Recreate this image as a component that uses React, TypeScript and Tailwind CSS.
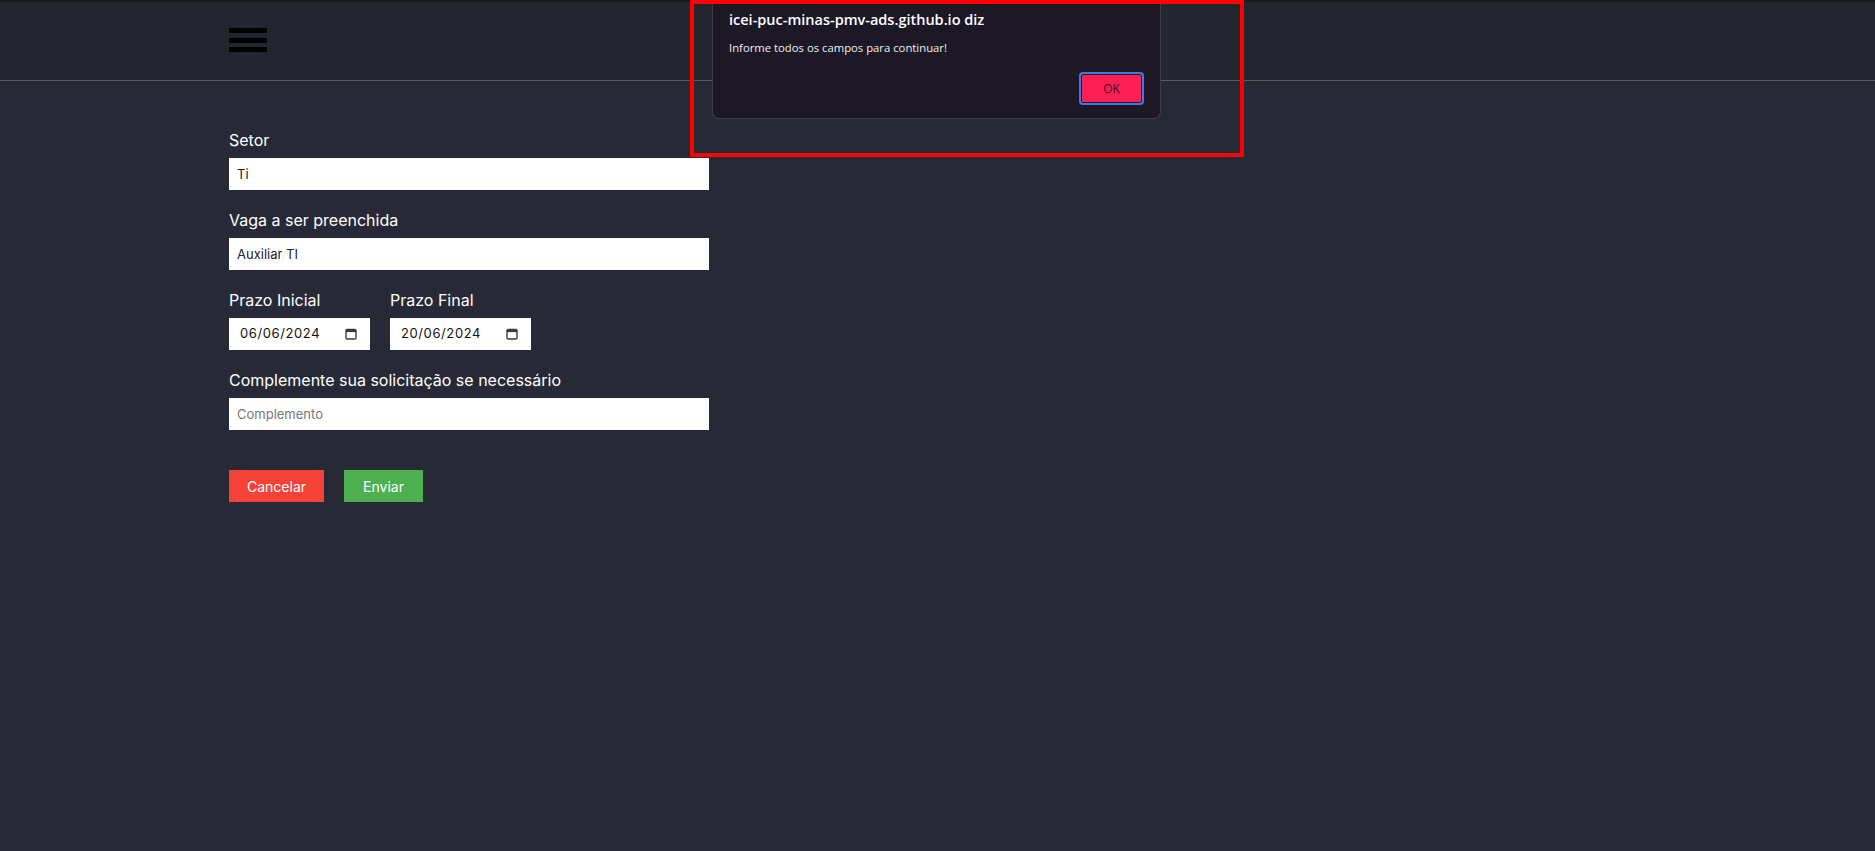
import React from "react";

function CalendarIcon() {
  return (
    <svg width="12" height="12" viewBox="0 0 12 12" className="shrink-0">
      <rect x="1" y="1.5" width="10" height="9.5" rx="1" fill="none" stroke="#3b3b3b" strokeWidth="1.4" />
      <rect x="1" y="1.5" width="10" height="2.6" fill="#3b3b3b" />
    </svg>
  );
}

function Field({ label, children }: { label: string; children: React.ReactNode }) {
  return (
    <div className="flex flex-col gap-[7px]">
      <label className="text-[16px] leading-[22px] text-white">{label}</label>
      {children}
    </div>
  );
}

function DateBox({ value }: { value: string }) {
  return (
    <div className="flex h-[32px] w-[141px] items-center justify-between bg-white pl-[11px] pr-[13px] text-[13px] tracking-[0.6px] text-[#111]">
      <span>{value}</span>
      <CalendarIcon />
    </div>
  );
}

export default function App() {
  return (
    <div className="relative min-h-[851px] bg-[#272a36] font-['Inter',sans-serif]">
      <div className="h-[2px] bg-[#1a1920]" />
      <header className="flex h-[79px] items-center border-b border-[#5c5c5f] bg-[#23262f] pl-[229px]">
        <button type="button" className="-mt-[2px] flex w-[38px] flex-col gap-[4.5px]">
          <span className="h-[5px] bg-black" />
          <span className="h-[5px] bg-black" />
          <span className="h-[5px] bg-black" />
        </button>
      </header>

      <form className="flex flex-col gap-[19px] pl-[229px] pt-[48px]">
        <Field label="Setor">
          <input
            defaultValue="Ti"
            className="h-[32px] w-[480px] bg-white px-[8px] text-[13px] text-[#222] outline-none"
          />
        </Field>
        <Field label="Vaga a ser preenchida">
          <input
            defaultValue="Auxiliar TI"
            className="h-[32px] w-[480px] bg-white px-[8px] text-[13px] text-[#222] outline-none"
          />
        </Field>
        <div className="flex gap-[20px]">
          <Field label="Prazo Inicial">
            <DateBox value="06/06/2024" />
          </Field>
          <Field label="Prazo Final">
            <DateBox value="20/06/2024" />
          </Field>
        </div>
        <Field label="Complemente sua solicitação se necessário">
          <input
            placeholder="Complemento"
            className="h-[32px] w-[480px] bg-white px-[8px] text-[13px] text-[#222] outline-none placeholder:text-[#777]"
          />
        </Field>
        <div className="mt-[21px] flex gap-[20px]">
          <button type="button" className="h-[32px] w-[95px] bg-[#f44336] text-[14px] text-white">
            Cancelar
          </button>
          <button type="button" className="h-[32px] w-[79px] bg-[#4caf50] text-[14px] text-white">
            Enviar
          </button>
        </div>
      </form>

      <div className="absolute left-[712px] top-0 h-[119px] w-[449px] rounded-b-[7px] border border-t-0 border-[#3e3c48] bg-[#1c1826] px-[16px] font-['Open_Sans',sans-serif]">
        <p className="pt-[10px] text-[14.5px] font-semibold leading-[20px] text-white">
          icei-puc-minas-pmv-ads.github.io diz
        </p>
        <p className="mt-[10px] text-[11.3px] leading-[16px] text-[#f0f0f0]">
          Informe todos os campos para continuar!
        </p>
        <div className="mt-[16px] flex justify-end">
          <button
            type="button"
            className="h-[33px] w-[65px] rounded-[4px] border-2 border-[#3b7de8] bg-[#ff1f55] text-[12px] text-[#3a1020] shadow-[inset_0_0_0_1px_#1c1826]"
          >
            OK
          </button>
        </div>
      </div>

      <div className="pointer-events-none absolute left-[690px] top-0 h-[157px] w-[554px] border-4 border-[#ff0000]" />
    </div>
  );
}
